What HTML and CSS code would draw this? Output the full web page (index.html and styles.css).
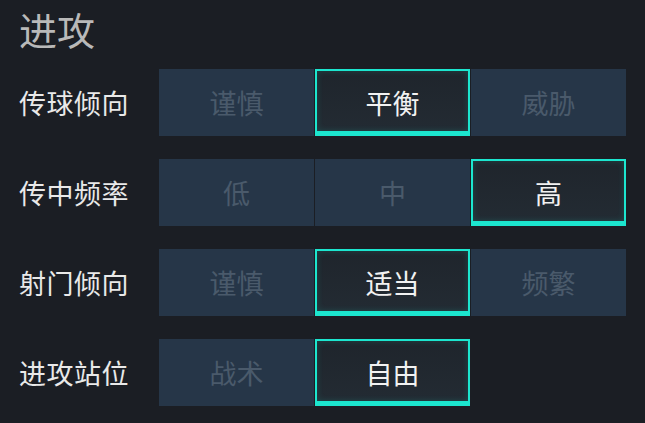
FILE: index.html
```html
<!DOCTYPE html>
<html lang="zh">
<head>
<meta charset="utf-8">
<link rel="stylesheet" href="styles.css">
</head>
<body>
<div class="page">
  <h1 class="title">进攻</h1>
  <div class="rows">
    <div class="row">
      <div class="label">传球倾向</div>
      <div class="seg">
        <div class="opt">谨慎</div>
        <div class="opt on">平衡</div>
        <div class="opt">威胁</div>
      </div>
    </div>
    <div class="row">
      <div class="label">传中频率</div>
      <div class="seg">
        <div class="opt">低</div>
        <div class="opt">中</div>
        <div class="opt on">高</div>
      </div>
    </div>
    <div class="row">
      <div class="label">射门倾向</div>
      <div class="seg">
        <div class="opt">谨慎</div>
        <div class="opt on">适当</div>
        <div class="opt">频繁</div>
      </div>
    </div>
    <div class="row">
      <div class="label">进攻站位</div>
      <div class="seg">
        <div class="opt">战术</div>
        <div class="opt on">自由</div>
      </div>
    </div>
  </div>
</div>
</body>
</html>
```
FILE: styles.css
```css
html, body {
  margin: 0;
  padding: 0;
  background: #1b1e24;
  width: 645px;
  height: 423px;
  overflow: hidden;
}
.page {
  padding: 10px 0 0 19px;
  font-family: "Noto Sans CJK SC", "Noto Sans", sans-serif;
}
.title {
  margin: 0 0 21px 0;
  font-size: 38px;
  line-height: 38px;
  font-weight: 400;
  color: #b9b9b9;
}
.rows {
  display: flex;
  flex-direction: column;
  gap: 23px;
}
.row {
  display: flex;
  align-items: center;
  height: 67px;
}
.label {
  width: 140px;
  font-size: 27px;
  color: #e9e9e9;
  letter-spacing: 0.5px;
}
.seg {
  display: grid;
  grid-template-columns: repeat(3, 155px);
  gap: 1px;
  height: 67px;
}
.opt {
  box-sizing: border-box;
  display: flex;
  align-items: center;
  justify-content: center;
  background: #263648;
  color: #4a5a6b;
  font-size: 27px;
  height: 67px;
}
.opt.on {
  border: 2px solid #1ce6cf;
  border-bottom-width: 5px;
  background: linear-gradient(180deg, #1f252c 0%, #232b33 100%);
  box-shadow: inset 0 0 6px rgba(28, 230, 207, 0.18);
  color: #f2f2f2;
  padding-top: 2px;
}
```
